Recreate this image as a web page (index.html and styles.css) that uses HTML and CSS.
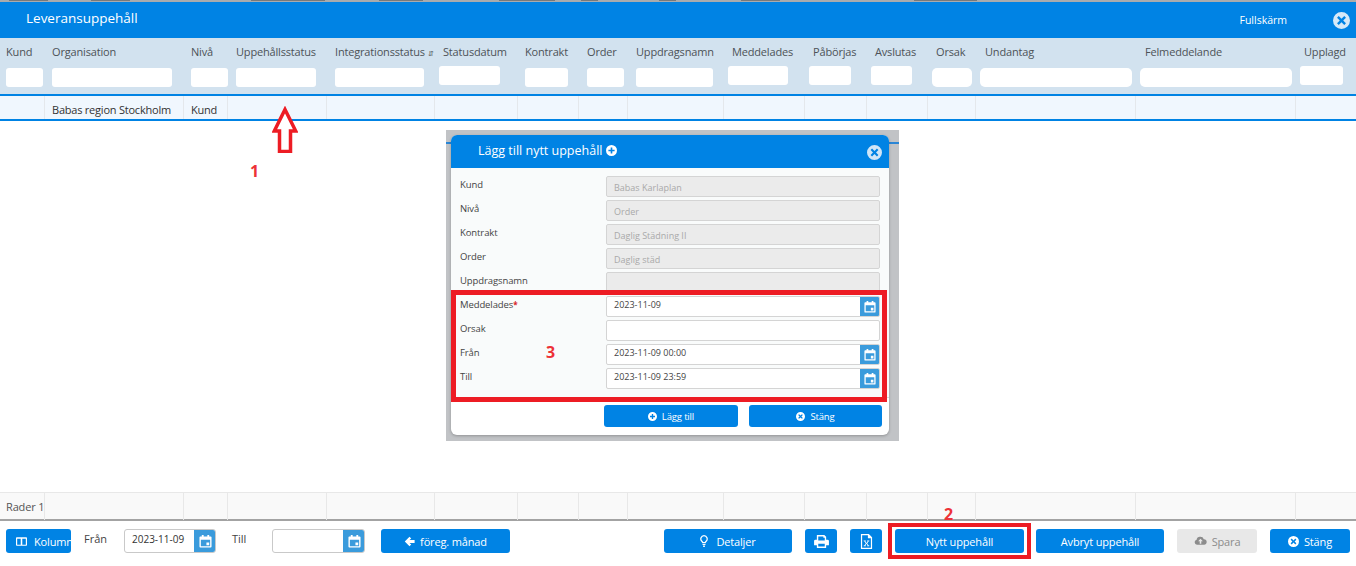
FILE: index.html
```html
<!DOCTYPE html>
<html lang="sv">
<head>
<meta charset="utf-8">
<title>Leveransuppehåll</title>
<link rel="stylesheet" href="styles.css">
</head>
<body>
<svg class="defs" width="0" height="0" aria-hidden="true">
  <symbol id="i-cal" viewBox="0 0 14 14"><path fill="currentColor" fill-rule="evenodd" d="M1.5 1.5H3V0h2v1.500h4V0h2v1.500h1.500A1 1 0 0 1 13.500 2.500v10a1 1 0 0 1-1 1h-11a1 1 0 0 1-1-1v-10a1 1 0 0 1 1-1zM2 5v7h10V5zM8 8h3v3H8z"/></symbol>
  <symbol id="i-x" viewBox="0 0 16 16"><path fill="currentColor" fill-rule="evenodd" d="M8 0a8 8 0 1 1 0 16A8 8 0 0 1 8 0zM5.400 3.800 3.800 5.400 6.400 8l-2.600 2.600 1.600 1.600L8 9.600l2.600 2.600 1.600-1.600L9.600 8l2.600-2.600-1.600-1.600L8 6.400z"/></symbol>
  <symbol id="i-plus" viewBox="0 0 16 16"><path fill="currentColor" fill-rule="evenodd" d="M8 0a8 8 0 1 1 0 16A8 8 0 0 1 8 0zM6.800 3.500v3.300H3.500v2.400h3.300v3.300h2.400V9.200h3.300V6.800H9.200V3.500z"/></symbol>
</svg>

<div class="strip"></div>
<header class="title-bar">
  <h1 class="title">Leveransuppehåll</h1>
  <a class="fullscreen">Fullskärm</a>
  <svg class="title-close"><use href="#i-x"/></svg>
</header>

<section class="grid-head cols">
  <div class="hcell h-first"><span class="hlabel">Kund</span><i class="filter w37 m-a"></i></div>
  <div class="hcell"><span class="hlabel">Organisation</span><i class="filter w120"></i></div>
  <div class="hcell"><span class="hlabel">Nivå</span><i class="filter w37"></i></div>
  <div class="hcell p9"><span class="hlabel">Uppehållsstatus</span><i class="filter w80"></i></div>
  <div class="hcell p9"><span class="hlabel">Integrationsstatus <b class="sort">⇵</b></span><i class="filter w89"></i></div>
  <div class="hcell p9"><span class="hlabel">Statusdatum</span><i class="filter w61 date"></i></div>
  <div class="hcell"><span class="hlabel">Kontrakt</span><i class="filter w43"></i></div>
  <div class="hcell p9"><span class="hlabel">Order</span><i class="filter w37"></i></div>
  <div class="hcell p9"><span class="hlabel">Uppdragsnamn</span><i class="filter w77"></i></div>
  <div class="hcell p9"><span class="hlabel">Meddelades</span><i class="filter w60 date"></i></div>
  <div class="hcell p9"><span class="hlabel">Påbörjas</span><i class="filter w42 date"></i></div>
  <div class="hcell p9"><span class="hlabel">Avslutas</span><i class="filter w41 date"></i></div>
  <div class="hcell p9"><span class="hlabel">Orsak</span><i class="filter w40 nudge"></i></div>
  <div class="hcell p10"><span class="hlabel">Undantag</span><i class="filter w152 nudge"></i></div>
  <div class="hcell p10"><span class="hlabel">Felmeddelande</span><i class="filter w152 nudge"></i></div>
  <div class="hcell p9"><span class="hlabel">Upplagd</span><i class="filter w43 date"></i></div>
</section>

<section class="grid-row cols">
  <div class="cell"></div><div class="cell">Babas region Stockholm</div><div class="cell">Kund</div>
  <div class="cell"></div><div class="cell"></div><div class="cell"></div><div class="cell"></div><div class="cell"></div>
  <div class="cell"></div><div class="cell"></div><div class="cell"></div><div class="cell"></div><div class="cell"></div>
  <div class="cell"></div><div class="cell"></div><div class="cell"></div>
</section>

<main class="grid-empty"></main>

<section class="grid-sum cols">
  <div class="sum">Rader 1</div><div class="sum"></div><div class="sum"></div><div class="sum"></div>
  <div class="sum"></div><div class="sum"></div><div class="sum"></div><div class="sum"></div>
  <div class="sum"></div><div class="sum"></div><div class="sum"></div><div class="sum"></div>
  <div class="sum"></div><div class="sum"></div><div class="sum"></div><div class="sum"></div>
</section>

<footer class="toolbar">
  <button class="btn btn-col"><svg class="ico" viewBox="0 0 14 14"><path fill="currentColor" fill-rule="evenodd" d="M1 1.500h12a1 1 0 0 1 1 1v9a1 1 0 0 1-1 1H1a1 1 0 0 1-1-1v-9a1 1 0 0 1 1-1zM1.500 3.500v7.500h4.500V3.500zM8 3.500v7.500h4.500V3.500z"/></svg><span>Kolumner</span></button>
  <span class="tlabel l-from">Från</span>
  <span class="date-field"><span class="date-val">2023-11-09</span><span class="cal-btn"><svg class="cal"><use href="#i-cal"/></svg></span></span>
  <span class="tlabel l-to">Till</span>
  <span class="date-field date-to"><span class="date-val"></span><span class="cal-btn"><svg class="cal"><use href="#i-cal"/></svg></span></span>
  <button class="btn btn-prev"><svg class="ico" viewBox="0 0 14 14"><path fill="currentColor" d="M7 1 9.200 3.200 7 5.200h6.500v3.600H7l2.200 2-2.200 2.200L1 7z"/></svg>föreg. månad</button>
  <span class="spacer"></span>
  <button class="btn btn-det"><svg class="ico tall" viewBox="0 0 9 14"><path fill="currentColor" fill-rule="evenodd" d="M4.500 0a4.500 4.500 0 0 1 3 7.800c-.6.600-.9 1.200-1 1.700h-4c-.1-.5-.4-1.100-1-1.700A4.500 4.500 0 0 1 4.500 0zM4.500 1.500a3 3 0 0 0-2 5.200c.6.500 1 1 1.200 1.500h1.600c.2-.5.600-1 1.200-1.500a3 3 0 0 0-2-5.200zM2.800 10.500h3.400v1.200H2.800zM3.500 12.300h2V14h-2z"/></svg>Detaljer</button>
  <button class="btn btn-icon"><svg class="ico print" viewBox="0 0 16 14"><path fill="currentColor" fill-rule="evenodd" d="M3 0h8l2 2v3h1.500A1.500 1.500 0 0 1 16 6.500V11h-3v3H3v-3H0V6.500A1.500 1.500 0 0 1 1.500 5H3zM4.500 1.500V6h7V3H10V1.500zM4.500 9.500v3h7v-3z"/></svg></button>
  <button class="btn btn-icon"><svg class="ico big" viewBox="0 0 16 16"><path fill="none" stroke="currentColor" stroke-width="1.300" d="M2.700.700h7.500l3.100 3.100v11.500H2.700z"/><path fill="currentColor" d="M9.500 1v3.500H13v-1L10.500 1zM5 7h2.300v.800h-.6l1.300 1.700 1.300-1.700h-.6V7H11v.800h-.6L8.700 10l1.700 2.200h.6v.8H8.700v-.8h.6L8 10.500l-1.300 1.700h.6v.8H5v-.8h.6L7.300 10 5.600 7.800H5z"/></svg></button>
  <button class="btn btn-new">Nytt uppehåll</button>
  <button class="btn btn-cancel">Avbryt uppehåll</button>
  <button class="btn btn-save"><svg class="ico wide" viewBox="0 0 16 14"><path fill="currentColor" fill-rule="evenodd" d="M8 1a4.500 4.500 0 0 1 4.200 3A3.500 3.500 0 0 1 12.500 11h-9A3.200 3.200 0 0 1 3 4.700 4.500 4.500 0 0 1 8 1zM8 3.500 5 6.800h2V10h2V6.800h2z"/></svg>Spara</button>
  <button class="btn btn-close"><svg class="ico"><use href="#i-x"/></svg>Stäng</button>
</footer>

<div class="dialog-shot">
  <span class="shot-line"></span>
  <div class="dialog">
    <div class="dialog-head">
      <span class="dialog-title">Lägg till nytt uppehåll</span>
      <svg class="dialog-plus"><use href="#i-plus"/></svg>
      <svg class="dialog-x"><use href="#i-x"/></svg>
    </div>
    <div class="dialog-body">
      <div class="frow"><label class="flabel">Kund</label><span class="finput off">Babas Karlaplan</span></div>
      <div class="frow"><label class="flabel">Nivå</label><span class="finput off">Order</span></div>
      <div class="frow"><label class="flabel">Kontrakt</label><span class="finput off">Daglig Städning II</span></div>
      <div class="frow"><label class="flabel">Order</label><span class="finput off">Daglig städ</span></div>
      <div class="frow"><label class="flabel">Uppdragsnamn</label><span class="finput off"></span></div>
      <div class="frow"><label class="flabel">Meddelades<b class="req">*</b></label><span class="finput"><span class="fval">2023-11-09</span><span class="cal-btn"><svg class="cal"><use href="#i-cal"/></svg></span></span></div>
      <div class="frow"><label class="flabel">Orsak</label><span class="finput"></span></div>
      <div class="frow"><label class="flabel">Från</label><span class="finput"><span class="fval">2023-11-09 00:00</span><span class="cal-btn"><svg class="cal"><use href="#i-cal"/></svg></span></span></div>
      <div class="frow"><label class="flabel">Till</label><span class="finput"><span class="fval">2023-11-09 23:59</span><span class="cal-btn"><svg class="cal"><use href="#i-cal"/></svg></span></span></div>
    </div>
    <div class="dialog-foot">
      <button class="btn dbtn"><svg class="ico"><use href="#i-plus"/></svg>Lägg till</button>
      <button class="btn dbtn"><svg class="ico"><use href="#i-x"/></svg>Stäng</button>
    </div>
  </div>
</div>

<!-- annotations drawn over the screenshot -->
<svg class="arrow" viewBox="0 0 26 47"><path fill="#fff" stroke="#ed1c24" stroke-width="3.500" d="M13 3.500 23.700 25H18.500V45.500H7.500V25H2.300z"/></svg>
<span class="mark m1">1</span>
<span class="mark m2">2</span>
<span class="mark m3">3</span>
<span class="redbox box-new"></span>
<span class="redbox box-form"></span>
</body>
</html>
```
FILE: styles.css
```css
* { box-sizing: border-box; }
html, body { margin: 0; height: 100%; }
body {
  position: relative;
  width: 1356px;
  height: 566px;
  overflow: hidden;
  display: flex;
  flex-direction: column;
  background: #fff;
  color: #444;
  font-family: "Open Sans", "Noto Sans", sans-serif;
  font-size: 11px;
}
.defs { position: absolute; }
/* sliver of the page behind: only the feet of its letters show */
.strip {
  height: 2px;
  flex: none;
  background-color: #a9abad;
  background-repeat: no-repeat;
  background-image:
    linear-gradient(#77797b, #77797b), linear-gradient(#77797b, #77797b),
    linear-gradient(#77797b, #77797b), linear-gradient(#77797b, #77797b),
    linear-gradient(#77797b, #77797b), linear-gradient(#77797b, #77797b),
    linear-gradient(#77797b, #77797b), linear-gradient(#77797b, #77797b),
    linear-gradient(#77797b, #77797b);
  background-position: 9px 0, 91px 0, 251px 0, 379px 0, 499px 0, 581px 0, 659px 0, 741px 0, 914px 0;
  background-size: 39px 1px, 39px 1px, 74px 1px, 44px 1px, 56px 1px, 17px 1px, 17px 1px, 39px 1px, 63px 1px;
}
.title-bar {
  height: 36px;
  flex: none;
  display: flex;
  align-items: center;
  background: #0083e4;
  color: #fff;
  padding: 0 6px 0 26px;
}
.title { margin: 0; flex: 1; font-size: 13.500px; font-weight: 400; position: relative; top: -2px; }
.fullscreen { font-size: 10.500px; margin-right: 46px; }
.title-close { width: 17px; height: 17px; color: #d6e9f8; }

.cols {
  display: grid;
  grid-template-columns: 44px 139px 44px 99px 108px 83px 61px 49px 96px 81px 62px 61px 48px 160px 160px 61px;
  flex: none;
}
.grid-head { height: 56px; background: #d2e2ef; }
.hcell { padding-left: 8px; display: flex; flex-direction: column; min-width: 0; white-space: nowrap; }
.h-first { padding-left: 6px; }
.p9 { padding-left: 9px; }
.p10 { padding-left: 10px; }
.hlabel { margin-top: 6px; height: 16px; line-height: 16px; color: #4d5257; font-size: 11px; letter-spacing: -.17px; }
.sort { font-weight: 400; font-size: 7px; }
.filter { display: block; height: 19px; margin-top: 8px; background: #fff; border-radius: 3px; }
.filter.date { margin-top: 6px; margin-left: -4px; }
.filter.nudge { margin-left: -4px; border-radius: 5px; }
.p10 .filter.nudge { margin-left: -5px; }
.w37 { width: 37px; } .w120 { width: 120px; } .w80 { width: 80px; } .w89 { width: 89px; }
.w61 { width: 61px; } .w43 { width: 43px; } .w77 { width: 77px; } .w60 { width: 60px; }
.w42 { width: 42px; } .w41 { width: 41px; } .w40 { width: 40px; } .w152 { width: 152px; }

.grid-row {
  height: 27px;
  background: #f0f7fe;
  border-top: 2px solid #0083e4;
  border-bottom: 2px solid #0083e4;
}
.cell { border-left: 1px solid #e4e8ec; padding-left: 7px; line-height: 27px; height: 23px; color: #333; white-space: nowrap; letter-spacing: -.22px; }
.cell:first-child { border-left: 0; }
.grid-empty { flex: 1; }
.grid-sum { height: 29px; background: #f9f9f9; border-top: 1px solid #e8e8e8; border-bottom: 2px solid #a3a3a3; }
.sum { border-left: 1px solid #e8e8e8; padding-left: 6px; line-height: 27px; color: #555; white-space: nowrap; letter-spacing: -.15px; }
.sum:first-child { border-left: 0; }

.toolbar {
  flex: none;
  height: 45px;
  display: flex;
  align-items: flex-start;
  padding: 8px 6px 0;
  color: #444;
}
.btn {
  flex: none;
  height: 24px;
  border: 0;
  border-radius: 3px;
  padding: 0;
  display: inline-flex;
  align-items: center;
  justify-content: center;
  gap: 5px;
  overflow: hidden;
  background: #0083e4;
  color: #fff;
  font: 11px "Open Sans", "Noto Sans", sans-serif;
  letter-spacing: -.15px;
}
.ico { width: 11px; height: 11px; flex: none; }
.ico.big { width: 15px; height: 15px; }
.ico.print { width: 15px; height: 13px; }
.ico.tall { width: 8px; height: 12px; margin-right: 3px; }
.ico.wide { width: 13px; height: 11px; }
.btn-col { width: 65px; justify-content: flex-start; padding-left: 10px; gap: 7px; }
.tlabel { line-height: 20px; }
.l-from { margin-left: 13px; width: 40px; }
.l-to { margin-left: 16px; width: 40px; }
.date-field {
  width: 92px;
  height: 24px;
  display: flex;
  border: 1px solid #c9c9c9;
  border-radius: 3px;
  overflow: hidden;
  background: #fff;
}
.date-to { width: 93px; }
.date-val { flex: 1; padding-left: 7px; line-height: 18px; color: #333; font-size: 10px; }
.cal-btn { width: 21px; flex: none; display: flex; align-items: center; justify-content: center; background: #3a9bdc; color: #fff; }
.date-field .cal-btn { width: 22px; margin: -1px -1px -1px 0; }
.cal { width: 13px; height: 13px; }
.btn-prev { width: 129px; margin-left: 16px; }
.spacer { flex: 1; }
.btn-det { width: 128px; }
.btn-icon { width: 32px; margin-left: 13px; }
.btn-new { width: 129px; margin-left: 13px; }
.btn-cancel { width: 128px; margin-left: 12px; }
.btn-save { width: 80px; margin-left: 13px; background: #e8e8e8; color: #8c8c8c; }
.btn-close { width: 80px; margin-left: 13px; }

/* pasted screenshot of the dialog, sitting on top of the page */
.dialog-shot {
  position: absolute;
  left: 446px;
  top: 130px;
  width: 453px;
  height: 311px;
  padding: 5px 10px 6px 5px;
  background: #c1c3c6;
}
.shot-line { position: absolute; left: 0; right: 0; top: 12px; height: 2px; background: #2a86d6; }
.dialog {
  position: relative;
  height: 300px;
  border-radius: 6px;
  overflow: hidden;
  background: #fff;
  display: flex;
  flex-direction: column;
  box-shadow: 0 1px 3px rgba(0,0,0,.25);
}
.dialog-head {
  height: 33px;
  flex: none;
  display: flex;
  align-items: center;
  gap: 4px;
  background: #0083e4;
  color: #fff;
  padding: 0 7px 2px 27px;
}
.dialog-title { font-size: 12.500px; }
.dialog-plus { width: 11px; height: 11px; }
.dialog-x { width: 15px; height: 15px; color: #cfe5f7; margin-left: auto; margin-top: 3px; }
.dialog-body { flex: none; height: 230px; padding: 8px 9px 0; background: #f9fbfb; display: flex; flex-direction: column; gap: 3px; border-bottom: 1px solid #d8d8d8; }
.frow { height: 21px; display: flex; flex: none; }
.flabel { width: 146px; font-size: 9.500px; color: #444; line-height: 17px; letter-spacing: -.1px; }
.req { color: #d8232a; font-weight: 700; font-size: 8px; }
.finput {
  flex: 1;
  display: flex;
  height: 21px;
  background: #fff;
  border: 1px solid #d4d4d4;
  border-radius: 2px;
  overflow: hidden;
  font-size: 9px;
  color: #444;
}
.finput.off { background: #ebebeb; color: #a9a9a9; padding-left: 7px; line-height: 21px; }
.fval { flex: 1; padding-left: 7px; line-height: 16px; }
.finput .cal-btn { width: 20px; margin: -1px -1px -1px 0; }
.finput .cal { width: 12px; height: 12px; }
.dialog-foot { flex: 1; display: flex; gap: 11px; padding: 7px 7px 0 0; justify-content: flex-end; align-items: flex-start; }
.dbtn { width: 134px; height: 22px; font-size: 9.500px; }
.dbtn + .dbtn { width: 133px; }
.dbtn .ico { width: 9px; height: 9px; }

/* red annotations */
.arrow { position: absolute; left: 272px; top: 106px; width: 26px; height: 47px; }
.mark { position: absolute; color: #ed3237; font-weight: 700; font-size: 16px; line-height: 16px; }
.m1 { left: 250px; top: 163px; }
.m2 { left: 944px; top: 506px; }
.m3 { left: 546px; top: 344px; }
.redbox { position: absolute; border: 4px solid #ed1c24; pointer-events: none; }
.box-new { left: 888px; top: 523px; width: 143px; height: 36px; }
.box-form { left: 451px; top: 290px; width: 436px; height: 112px; border-width: 5px; }
```
